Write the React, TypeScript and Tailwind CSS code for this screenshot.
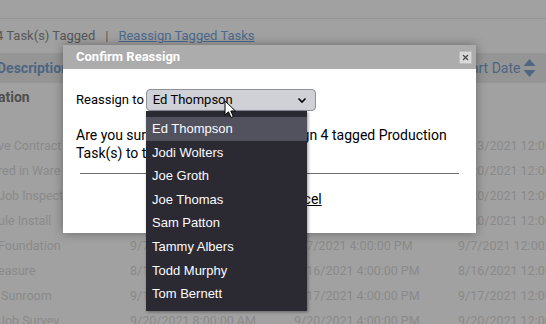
const rows = [
  { a: 've Contract', b: '9/13/2021 8:00:00 AM', c: '9/13/2021 4:00:00 PM', d: '9/13/2021 12:00:00 AM' },
  { a: 'red in Ware', b: '9/20/2021 8:00:00 AM', c: '9/20/2021 4:00:00 PM', d: '9/20/2021 12:00:00 AM' },
  { a: 'Job Inspect', b: '9/20/2021 8:00:00 AM', c: '9/20/2021 4:00:00 PM', d: '9/20/2021 12:00:00 AM' },
  { a: 'ule Install', b: '9/20/2021 8:00:00 AM', c: '9/20/2021 4:00:00 PM', d: '9/20/2021 12:00:00 AM' },
  { a: 'Foundation', b: '9/7/2021 8:00:00 AM', c: '9/7/2021 4:00:00 PM', d: '9/7/2021 12:00:00 AM' },
  { a: 'easure', b: '8/16/2021 8:00:00 AM', c: '8/16/2021 4:00:00 PM', d: '8/16/2021 12:00:00 AM' },
  { a: ' Sunroom', b: '9/17/2021 8:00:00 AM', c: '9/17/2021 4:00:00 PM', d: '9/17/2021 12:00:00 AM' },
  { a: 'Job Survey', b: '9/20/2021 8:00:00 AM', c: '9/20/2021 4:00:00 PM', d: '9/20/2021 12:00:00 AM' },
];

const people = [
  'Ed Thompson',
  'Jodi Wolters',
  'Joe Groth',
  'Joe Thomas',
  'Sam Patton',
  'Tammy Albers',
  'Todd Murphy',
  'Tom Bernett',
];

export default function App() {
  return (
    <div className="relative w-[546px] h-[324px] overflow-hidden bg-[#a1a1a1] font-['Roboto',sans-serif]">
      {/* page behind the overlay */}
      <div className="h-[19px] border-b border-[#959595]" />
      <div className="h-[34px] flex items-center text-[13px] text-[#585858] ml-[-4px] whitespace-nowrap">
        <span>4 Task(s) Tagged</span>
        <span className="mx-[10px]">|</span>
        <span className="underline text-[#4b6a8f]">Reassign Tagged Tasks</span>
      </div>
      <div className="h-[30px] bg-[#959595] grid grid-cols-[130px_164px_164px_1fr] items-center text-[14px] text-[#4e6682] whitespace-nowrap">
        <div className="font-bold ml-[-3px]">Description</div>
        <div />
        <div />
        <div className="flex items-center gap-[3px]">
          <span>Start Date</span>
          <svg width="13" height="20" viewBox="0 0 13 20" className="fill-[#4e6682]">
            <path d="M6.5 1 L12.5 8 H0.5 Z" />
            <path d="M6.5 19 L12.5 12 H0.5 Z" />
          </svg>
        </div>
      </div>
      <div className="h-[28px] flex items-center text-[14px] font-bold text-[#4f4f4f] ml-[-2px]">ation</div>
      <div className="h-[23px]" />
      {rows.map((r, i) => (
        <div key={i} className="h-[25px] grid grid-cols-[130px_164px_164px_1fr] items-center text-[12.5px] text-[#8a8a8a] whitespace-nowrap">
          <div className="ml-[-2px] whitespace-pre">{r.a}</div>
          <div>{r.b}</div>
          <div>{r.c}</div>
          <div>{r.d}</div>
        </div>
      ))}

      {/* dialog */}
      <div className="absolute left-[63px] top-[45px] w-[413px] h-[188px] bg-white shadow-[0_0_10px_rgba(0,0,0,0.35)] flex flex-col">
        <div className="h-[24px] bg-[#acacac] flex items-center justify-between pl-[13px] pr-[4px]">
          <span className="text-white font-bold text-[13px]">Confirm Reassign</span>
          <div className="w-[13px] h-[13px] bg-[#dadada] border border-[#bdbdbd] rounded-[1px] flex items-center justify-center">
            <svg width="7" height="7" viewBox="0 0 7 7" className="stroke-[#4a4a4a]" strokeWidth="1.3">
              <path d="M1 1 L6 6 M6 1 L1 6" />
            </svg>
          </div>
        </div>
        <div className="flex-1 px-[13px] pt-[20px]">
          <div className="flex items-center h-[22px] text-[13px] text-black">
            <span>Reassign to</span>
            <div className="ml-[2px] w-[170px] h-[22px] rounded-[4px] border border-[#8f8f9d] bg-[#d0d0d7] flex items-center justify-between pl-[6px] pr-[8px]">
              <span>Ed Thompson</span>
              <svg width="10" height="7" viewBox="0 0 10 7" fill="none" className="stroke-black" strokeWidth="1.6">
                <path d="M1.5 1.5 L5 5 L8.5 1.5" />
              </svg>
            </div>
          </div>
          <p className="mt-[15px] text-[14px] leading-[18px] text-black">
            Are you sure you would like to reassign 4 tagged Production Task(s) to the selected user?
          </p>
          <div className="mx-[4px] mt-[11px] border-t border-[#6b6b6b]" />
          <div className="mt-[16px] flex gap-[14px] pl-[132px] text-[14px] leading-[18px] text-black">
            <span className="underline">Reassign</span>
            <span className="underline">Cancel</span>
          </div>
        </div>
      </div>

      {/* open select list */}
      <div className="absolute left-[146px] top-[111px] w-[161px] h-[200px] bg-[#2b2a33] pt-[6px] shadow-[1px_1px_3px_rgba(0,0,0,0.4)] font-['Liberation_Sans',Arial,sans-serif] text-[13px] text-[#fbfbfe]">
        {people.map((p, i) => (
          <div key={p} className={`h-[23.6px] flex items-center pl-[6px] ${i === 0 ? 'bg-[#52525e]' : ''}`}>
            {p}
          </div>
        ))}
      </div>

      {/* mouse pointer */}
      <svg className="absolute left-[224px] top-[100px]" width="13" height="19" viewBox="0 0 13 19">
        <path d="M1 1 L1 15 L4.5 11.8 L7 17.5 L9.3 16.5 L6.8 11 L11.5 11 Z" fill="white" stroke="black" strokeWidth="1" strokeLinejoin="round" />
      </svg>
    </div>
  );
}
